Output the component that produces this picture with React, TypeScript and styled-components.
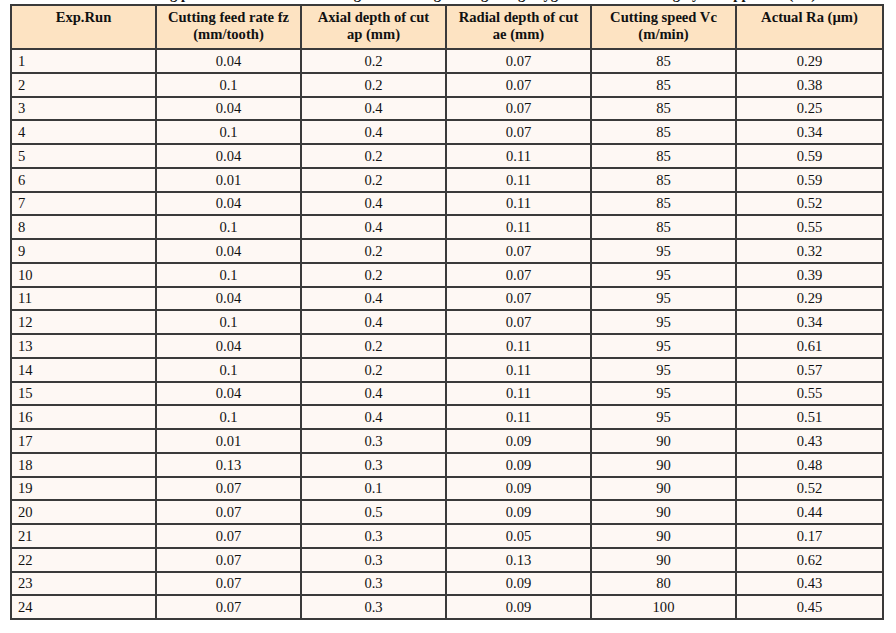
import React from "react";
import styled, { createGlobalStyle } from "styled-components";

const Global = createGlobalStyle`
  html, body { margin: 0; padding: 0; background: #ffffff; }
  body { font-family: "Liberation Serif", "Times New Roman", serif; color: #111; }
  table { font-family: "Liberation Serif", "Times New Roman", serif; font-size: 14.6px; }
`;

const Page = styled.div`
  padding: 0 0 0 11px;
  width: 871px;
`;

const CaptionClip = styled.div`
  height: 4px;
  overflow: hidden;
`;

const Caption = styled.div`
  margin-top: -14px;
  font-family: "Liberation Serif", "Times New Roman", serif;
  font-size: 14.6px;
  line-height: 17px;
  font-weight: bold;
  text-align: center;
  white-space: nowrap;
`;

const Table = styled.table`
  border-collapse: collapse;
  table-layout: fixed;
  width: 872px;
  margin-left: -1px;
`;

const HeadCell = styled.th`
  background: #fde3c2;
  border: 2px solid #3a3a3a;
  height: 44px;
  padding: 3px 2px 0;
  vertical-align: top;
  text-align: center;
  font-family: "Liberation Serif", "Times New Roman", serif;
  font-size: 14.6px;
  font-weight: bold;
  line-height: 17px;
  color: #111;
  box-sizing: border-box;
`;

const Row = styled.tr`
  height: 23.75px;
`;

const Cell = styled.td<{ $left?: boolean }>`
  background: #fef8f4;
  border: 2px solid #3a3a3a;
  padding: 1px ${(p) => (p.$left ? "6px" : "4px")} 0;
  text-align: ${(p) => (p.$left ? "left" : "center")};
  font-family: "Liberation Serif", "Times New Roman", serif;
  font-size: 14.6px;
  line-height: 19px;
  color: #111;
  vertical-align: middle;
  box-sizing: border-box;
`;

const headers = [
  ["Exp.Run"],
  ["Cutting feed rate fz", "(mm/tooth)"],
  ["Axial depth of cut", "ap (mm)"],
  ["Radial depth of cut", "ae (mm)"],
  ["Cutting speed Vc", "(m/min)"],
  ["Actual Ra (\u00b5m)"],
];

const rows: string[][] = [
  ["1", "0.04", "0.2", "0.07", "85", "0.29"],
  ["2", "0.1", "0.2", "0.07", "85", "0.38"],
  ["3", "0.04", "0.4", "0.07", "85", "0.25"],
  ["4", "0.1", "0.4", "0.07", "85", "0.34"],
  ["5", "0.04", "0.2", "0.11", "85", "0.59"],
  ["6", "0.01", "0.2", "0.11", "85", "0.59"],
  ["7", "0.04", "0.4", "0.11", "85", "0.52"],
  ["8", "0.1", "0.4", "0.11", "85", "0.55"],
  ["9", "0.04", "0.2", "0.07", "95", "0.32"],
  ["10", "0.1", "0.2", "0.07", "95", "0.39"],
  ["11", "0.04", "0.4", "0.07", "95", "0.29"],
  ["12", "0.1", "0.4", "0.07", "95", "0.34"],
  ["13", "0.04", "0.2", "0.11", "95", "0.61"],
  ["14", "0.1", "0.2", "0.11", "95", "0.57"],
  ["15", "0.04", "0.4", "0.11", "95", "0.55"],
  ["16", "0.1", "0.4", "0.11", "95", "0.51"],
  ["17", "0.01", "0.3", "0.09", "90", "0.43"],
  ["18", "0.13", "0.3", "0.09", "90", "0.48"],
  ["19", "0.07", "0.1", "0.09", "90", "0.52"],
  ["20", "0.07", "0.5", "0.09", "90", "0.44"],
  ["21", "0.07", "0.3", "0.05", "90", "0.17"],
  ["22", "0.07", "0.3", "0.13", "90", "0.62"],
  ["23", "0.07", "0.3", "0.09", "80", "0.43"],
  ["24", "0.07", "0.3", "0.09", "100", "0.45"],
];

const widths = [145, 145, 145, 145, 145, 147];

export default function App() {
  return (
    <>
      <Global />
      <Page>
        <CaptionClip>
          <Caption>
            Table 3. Cutting parameters and surface roughness during milling using oxygen-enriched cooling by the approach (Ra)
          </Caption>
        </CaptionClip>
        <Table>
          <colgroup>
            {widths.map((w, i) => (
              <col key={i} style={{ width: w }} />
            ))}
          </colgroup>
          <thead>
            <tr>
              {headers.map((h, i) => (
                <HeadCell key={i}>
                  {h.map((line, j) => (
                    <React.Fragment key={j}>
                      {j > 0 && <br />}
                      {line}
                    </React.Fragment>
                  ))}
                </HeadCell>
              ))}
            </tr>
          </thead>
          <tbody>
            {rows.map((r, i) => (
              <Row key={i}>
                {r.map((v, j) => (
                  <Cell key={j} $left={j === 0}>
                    {v}
                  </Cell>
                ))}
              </Row>
            ))}
          </tbody>
        </Table>
      </Page>
    </>
  );
}
